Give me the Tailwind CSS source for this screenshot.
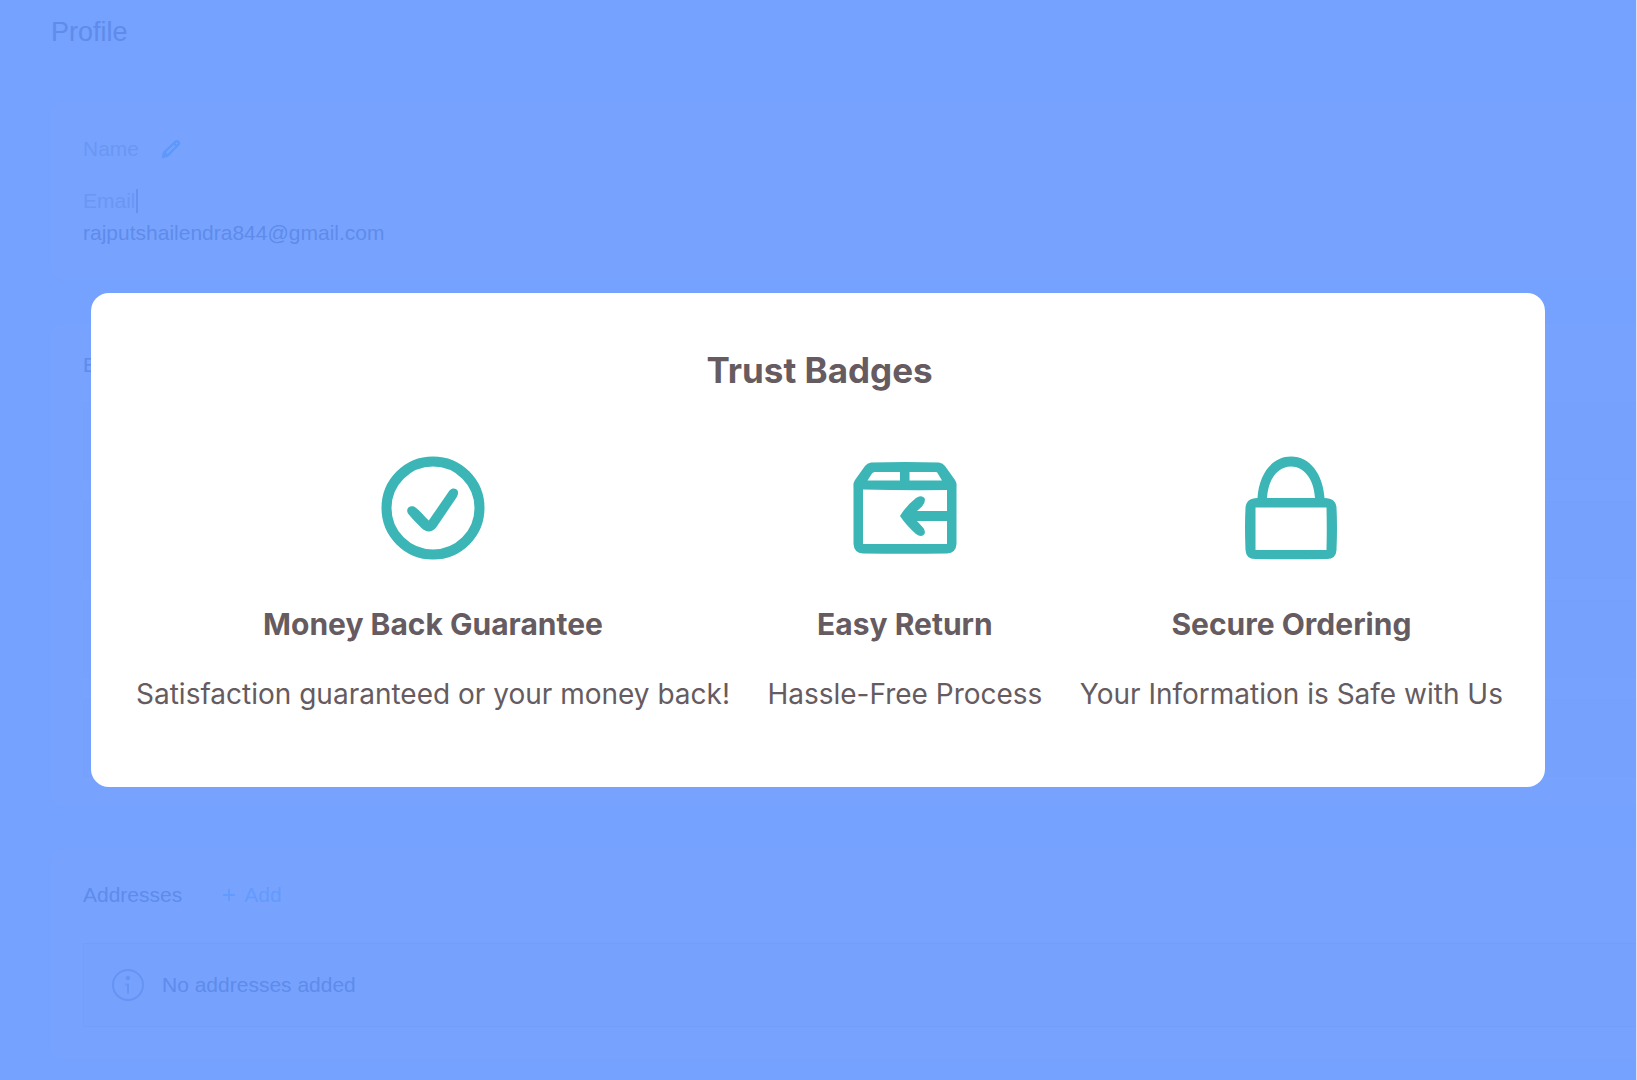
<!DOCTYPE html>
<html lang="en">
  <head>
    <meta charset="UTF-8" />
    <meta name="viewport" content="width=device-width, initial-scale=1.0" />
    <title>Profile</title>
    <script src="https://cdn.jsdelivr.net/npm/@tailwindcss/browser@4"></script>
  </head>

  <body class="relative min-h-screen overflow-hidden border-r border-[#d5e2ff] bg-[#75a1ff] font-['Liberation_Sans',Arial,sans-serif] text-[21px] leading-8 text-[#5f8bea]">
    <!-- Profile page -->
    <main class="flex flex-col pl-[51px]">
      <h1 class="h-[102px] pt-4 text-[27px] leading-8">Profile</h1>

      <section class="h-[178px] rounded-l-xl bg-[#77a3ff] px-8 pt-[31px]">
        <div class="flex items-center gap-[22px]">
          <h2 class="text-[#6b97f3]">Name</h2>
          <button type="button" aria-label="Edit name">
            <svg class="size-5" viewBox="0 0 20 20" fill="none" stroke="#5d98fb" stroke-width="2.4" stroke-linejoin="round">
              <path d="M2 18l1.2-4.6L14.6 2.6c.7-.7 1.6-.7 2.3 0l.6.6c.7.7.7 1.6 0 2.3L6.6 16.6zM13 4.5l2.8 2.8M3.2 13.4l3.4 3.2" />
            </svg>
          </button>
        </div>
        <div class="mt-5 flex items-center text-[#6b97f3]">
          Email
          <span class="h-6 w-0.5 bg-[#6691f0]"></span>
        </div>
        <p>rajputshailendra844@gmail.com</p>
      </section>

      <section class="mt-11 h-[482px] rounded-l-xl bg-[#77a3ff] pt-[25px] pl-8">
        <h2>Billing</h2>
        <div class="mt-[21px] flex flex-col gap-[21px]">
          <div class="h-[78px] border border-r-0 border-[#75a1fd] bg-[#76a2fe]"></div>
          <div class="h-[78px] border border-r-0 border-[#75a1fd] bg-[#76a2fe]"></div>
          <div class="h-[78px] border border-r-0 border-[#75a1fd] bg-[#76a2fe]"></div>
          <div class="h-[78px] border border-r-0 border-[#75a1fd] bg-[#76a2fe]"></div>
        </div>
      </section>

      <section class="mt-[42px] rounded-l-xl bg-[#77a3ff] pt-[31px] pb-8 pl-8">
        <div class="flex items-center gap-10">
          <h2>Addresses</h2>
          <button type="button" class="flex items-center gap-2 text-[#639afd]">
            <svg class="size-[14px]" viewBox="0 0 14 14" stroke="currentColor" stroke-width="2" aria-hidden="true">
              <path d="M7 1v12M1 7h12" />
            </svg>
            Add
          </button>
        </div>
        <div class="mt-8 flex h-[84px] items-center gap-[18px] border border-r-0 border-[#739ffc] bg-[#76a2fe] pl-7">
          <svg class="size-8" viewBox="0 0 32 32" fill="none" stroke="#6793f2" stroke-width="2" aria-hidden="true">
            <circle cx="16" cy="16" r="15" />
            <path d="M13.5 15.5h2.5v9" />
            <circle cx="16" cy="9" r="1.2" fill="#6793f2" />
          </svg>
          <p>No addresses added</p>
        </div>
      </section>
    </main>

    <!-- Trust badges -->
    <div class="absolute inset-0 flex items-center justify-center px-[91px]">
      <section class="w-full rounded-[18px] bg-white pt-[55px] pr-[42px] pb-[71px] pl-[45px] font-[Inter,sans-serif] text-[#655b60]">
        <h2 class="text-center text-[35px] leading-[44px] font-bold">Trust Badges</h2>
        <div class="mt-16 flex justify-between text-center whitespace-nowrap">
          <article class="flex flex-col items-center">
            <svg class="size-[104px]" viewBox="0 0 104 104" aria-hidden="true">
              <circle cx="52" cy="52" r="46.5" fill="none" stroke="#3bb5b5" stroke-width="10" />
              <path fill="#3bb5b5" d="M27 57.5C24.500 53 28 49 33 50.500C38 53.500 43 60 47.800 64.500L68.500 34.500C71 31.500 75 32 76.500 34.500C77.500 36.500 77 39 75.500 41.500L55.500 71C51.500 76.500 45.500 77 40.500 72C36 67.500 31 62.500 27 57.500Z" />
            </svg>
            <h3 class="mt-11 text-[30px] leading-10 font-bold">Money Back Guarantee</h3>
            <p class="mt-7 text-[28px] leading-[44px]">Satisfaction guaranteed or your money back!</p>
          </article>
          <article class="flex flex-col items-center">
            <svg class="size-[104px]" viewBox="0 0 104 104" aria-hidden="true">
              <path fill="#3bb5b5" fill-rule="evenodd" d="M18 6.500Q52 5.500 86 6.500Q90 7 92 10L102 24Q104 27 103.500 31V88Q103 97 94 97.500Q52 98 10 97.500Q1 97 .5 88V31Q0 27 2 24L12 10Q14 7 18 6.500ZM21.500 16Q19 16.500 18 19L14.500 24.500H47V16ZM56.500 16V24.500H89L84.500 17Q84 16 83 16ZM10 33.500V88H94V65H64L69 70.500Q73 74 71.500 78Q68.500 82 63 78Q53 69 47 60Q53 50 63 42Q68 38.500 71.500 42Q73 46 69 50.500L64 55H94V34Q52 34.500 10 33.500Z" />
            </svg>
            <h3 class="mt-11 text-[30px] leading-10 font-bold">Easy Return</h3>
            <p class="mt-7 text-[28px] leading-[44px]">Hassle-Free Process</p>
          </article>
          <article class="flex flex-col items-center">
            <svg class="size-[104px]" viewBox="0 0 104 104" aria-hidden="true">
              <path fill="#3bb5b5" fill-rule="evenodd" d="M18.500 42C20 18 33 .5 52 .5S84 18 85.500 42Q97 42 97.500 52Q98.500 70 97.500 94Q97 103 88 103Q52 103.500 16 103Q7 103 6.500 94Q5.500 70 6.500 52Q7 42 18.500 42ZM28 42H76C75 23 65 10.500 52 10.500S29 23 28 42ZM16.500 51.500V94H87.500Q88 72 87.500 51.500Z" />
            </svg>
            <h3 class="mt-11 text-[30px] leading-10 font-bold">Secure Ordering</h3>
            <p class="mt-7 text-[28px] leading-[44px]">Your Information is Safe with Us</p>
          </article>
        </div>
      </section>
    </div>
  </body>
</html>
